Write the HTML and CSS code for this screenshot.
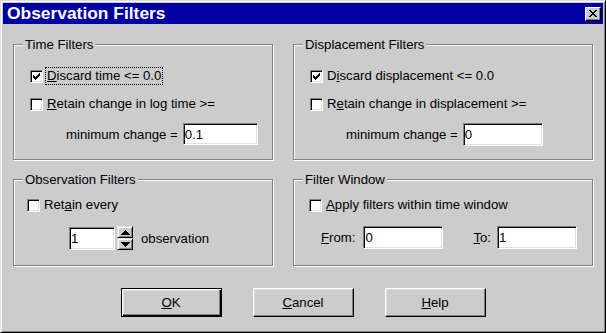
FILE: index.html
```html
<!DOCTYPE html>
<html lang="en">
<head>
  <meta charset="UTF-8">
  <title>Observation Filters</title>
  <link rel="stylesheet" href="styles.css">
</head>
<body>
  <div class="window">
    <div class="titlebar">
      <span class="title">Observation Filters</span>
      <span class="close-btn">
        <svg width="8" height="7" viewBox="0 0 8 7" shape-rendering="crispEdges"><path d="M0 0h2v1h-2z M6 0h2v1h-2z M1 1h2v1h-2z M5 1h2v1h-2z M2 2h4v1h-4z M3 3h2v1h-2z M2 4h4v1h-4z M1 5h2v1h-2z M5 5h2v1h-2z M0 6h2v1h-2z M6 6h2v1h-2z" fill="#000"/></svg>
      </span>
    </div>

    <div class="dialog-body">
      <div class="groups">
        <fieldset class="group group-time">
          <legend>Time Filters</legend>
          <div class="group-body">
            <div class="check-row">
              <span class="checkbox"><svg width="7" height="7" viewBox="0 0 7 7" shape-rendering="crispEdges"><path d="M6 0h1v1h-1z M5 1h2v1h-2z M0 2h1v1h-1z M4 2h3v1h-3z M0 3h2v1h-2z M3 3h3v1h-3z M0 4h5v1h-5z M1 5h3v1h-3z M2 6h1v1h-1z" fill="#000"/></svg></span>
              <span class="check-label focused"><u>D</u>iscard time &lt;= 0.0</span>
            </div>
            <div class="check-row">
              <span class="checkbox"></span>
              <span class="check-label"><u>R</u>etain change in log time &gt;=</span>
            </div>
            <div class="field-row min-row">
              <span>minimum change =</span>
              <input class="textbox w75" type="text" value="0.1">
            </div>
          </div>
        </fieldset>

        <fieldset class="group group-disp">
          <legend>Displacement Filters</legend>
          <div class="group-body">
            <div class="check-row">
              <span class="checkbox"><svg width="7" height="7" viewBox="0 0 7 7" shape-rendering="crispEdges"><path d="M6 0h1v1h-1z M5 1h2v1h-2z M0 2h1v1h-1z M4 2h3v1h-3z M0 3h2v1h-2z M3 3h3v1h-3z M0 4h5v1h-5z M1 5h3v1h-3z M2 6h1v1h-1z" fill="#000"/></svg></span>
              <span class="check-label">D<u>i</u>scard displacement &lt;= 0.0</span>
            </div>
            <div class="check-row">
              <span class="checkbox"></span>
              <span class="check-label">R<u>e</u>tain change in displacement &gt;=</span>
            </div>
            <div class="field-row min-row">
              <span>minimum change =</span>
              <input class="textbox w80" type="text" value="0">
            </div>
          </div>
        </fieldset>

        <fieldset class="group group-obs">
          <legend>Observation Filters</legend>
          <div class="group-body">
            <div class="check-row">
              <span class="checkbox"></span>
              <span class="check-label">Ret<u>a</u>in every</span>
            </div>
            <div class="field-row spin-row">
              <input class="textbox w46" type="text" value="1">
              <span class="spinner">
                <span class="spin-btn"><svg width="9" height="5" viewBox="0 0 9 5" shape-rendering="crispEdges"><path d="M4 0h1v1h-1z M3 1h3v1h-3z M2 2h5v1h-5z M1 3h7v1h-7z M0 4h9v1h-9z" fill="#000"/></svg></span>
                <span class="spin-btn"><svg width="9" height="5" viewBox="0 0 9 5" shape-rendering="crispEdges"><path d="M0 0h9v1h-9z M1 1h7v1h-7z M2 2h5v1h-5z M3 3h3v1h-3z M4 4h1v1h-1z" fill="#000"/></svg></span>
              </span>
              <span class="spin-caption">observation</span>
            </div>
          </div>
        </fieldset>

        <fieldset class="group group-window">
          <legend>Filter Window</legend>
          <div class="group-body">
            <div class="check-row">
              <span class="checkbox"></span>
              <span class="check-label"><u>A</u>pply filters within time window</span>
            </div>
            <div class="field-row range-row">
              <span><u>F</u>rom:</span>
              <input class="textbox w80" type="text" value="0">
              <span class="to-label"><u>T</u>o:</span>
              <input class="textbox w80" type="text" value="1">
            </div>
          </div>
        </fieldset>
      </div>

      <div class="buttons">
        <button class="default"><u>O</u>K</button>
        <button><u>C</u>ancel</button>
        <button><u>H</u>elp</button>
      </div>
    </div>
  </div>
</body>
</html>
```

FILE: styles.css
```css
body {
  margin: 0;
  background-color: #cccccc;
}
.window {
  width: 606px;
  height: 333px;
  box-sizing: border-box;
  padding: 2px;
  border: 1px solid;
  border-color: #dfdfdf #000 #000 #dfdfdf;
  box-shadow: inset 1px 1px #fff, inset -1px -1px #808080;
  background-color: #cccccc;
  font-family: "Liberation Sans", Arial, sans-serif;
  font-size: 13.2px;
  color: #000;
}
.titlebar {
  height: 21px;
  display: flex;
  align-items: center;
  justify-content: space-between;
  padding: 0 2px 0 4px;
  background-color: #0000a0;
}
.title {
  color: #fff;
  font-weight: bold;
  font-size: 17.4px;
}
.close-btn {
  width: 16px;
  height: 14px;
  box-sizing: border-box;
  display: flex;
  align-items: center;
  justify-content: center;
  background-color: #cccccc;
  border: 1px solid;
  border-color: #fff #000 #000 #fff;
  box-shadow: inset -1px -1px #808080;
}
.dialog-body {
  padding: 13px 10px 0;
}
.groups {
  display: grid;
  grid-template-columns: 260px 300px;
  grid-template-rows: 123px 94px;
  gap: 12px 20px;
}
.group {
  margin: 0;
  padding: 0;
  min-width: 0;
  border: 1px solid #808080;
  box-shadow: inset 1px 1px #fff, 1px 1px #fff;
}
.group legend {
  margin-left: 9px;
  padding: 0 2px;
  line-height: 15px;
  background-color: #cccccc;
}
.group-time .group-body,
.group-disp .group-body {
  padding: 10px 0 0 16px;
}
.group-obs .group-body {
  padding: 4px 0 0 13px;
}
.group-window .group-body {
  padding: 4px 0 0 15px;
}
.check-row {
  height: 28px;
  display: flex;
  align-items: center;
}
.checkbox {
  width: 13px;
  height: 13px;
  box-sizing: border-box;
  display: flex;
  align-items: center;
  justify-content: center;
  background-color: #fff;
  border: 1px solid;
  border-color: #808080 #fff #fff #808080;
  box-shadow: inset 1px 1px #000, inset -1px -1px #dfdfdf;
}
.check-label {
  margin-left: 2px;
  padding: 0 1px;
  line-height: 16px;
  border: 1px solid transparent;
}
.check-label.focused {
  border: 1px dotted #000;
}
.field-row {
  display: flex;
  align-items: center;
  margin-top: 5px;
}
.min-row {
  padding-left: 36px;
}
.min-row .textbox {
  margin-left: 5px;
}
.textbox {
  height: 22px;
  box-sizing: border-box;
  margin: 0;
  padding: 0 1px;
  font-family: inherit;
  font-size: 13.2px;
  color: #000;
  background-color: #fff;
  border: 1px solid;
  border-color: #808080 #fff #fff #808080;
  box-shadow: inset 1px 1px #000, inset -1px -1px #dfdfdf;
  outline: none;
}
.w46 { width: 46px; height: 23px; }
.w75 { width: 75px; }
.w80 { width: 80px; height: 23px; }
.spin-row {
  margin-top: 7px;
  padding-left: 42px;
}
.spinner {
  display: flex;
  flex-direction: column;
  margin-left: 2px;
}
.spin-btn {
  width: 16px;
  height: 12px;
  box-sizing: border-box;
  display: flex;
  align-items: center;
  justify-content: center;
  background-color: #cccccc;
  border: 1px solid;
  border-color: #dfdfdf #000 #000 #dfdfdf;
  box-shadow: inset 1px 1px #fff, inset -1px -1px #808080;
}
.spin-caption {
  margin-left: 8px;
}
.range-row {
  margin-top: 7px;
  padding-left: 12px;
}
.range-row .textbox {
  margin-left: 8px;
}
.range-row .to-label {
  margin-left: 30px;
}
.range-row .to-label + .textbox {
  margin-left: 6px;
}
.buttons {
  display: flex;
  justify-content: center;
  gap: 31px;
  margin-top: 22px;
}
button {
  width: 101px;
  height: 29px;
  padding: 0;
  font-family: inherit;
  font-size: 13.2px;
  color: #000;
  background-color: #cccccc;
  border: 1px solid;
  border-color: #fff #000 #000 #fff;
  box-shadow: inset -1px -1px #808080, inset 1px 1px #dfdfdf;
}
button.default {
  border-color: #000;
  box-shadow: inset 1px 1px #fff, inset -1px -1px #000, inset -2px -2px #808080, inset 2px 2px #dfdfdf;
}
```
